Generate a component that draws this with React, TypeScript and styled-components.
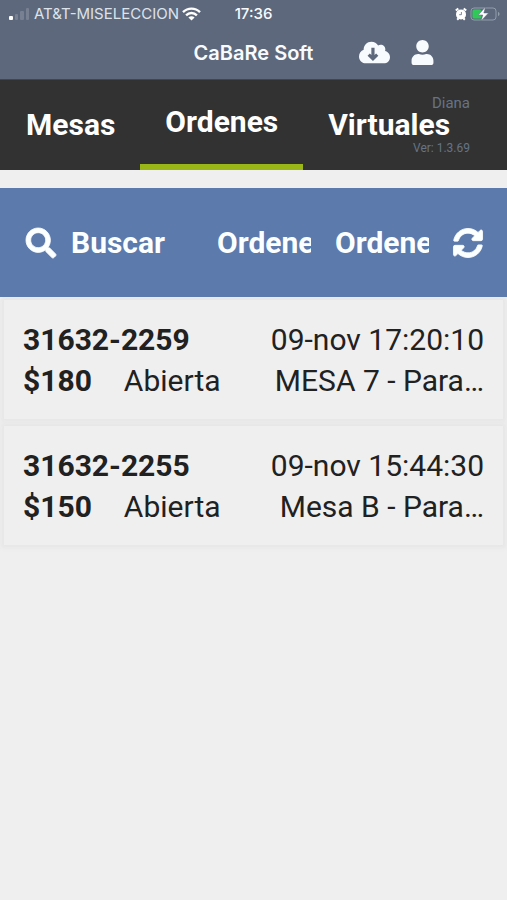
import React, { useState } from "react";
import styled, { createGlobalStyle } from "styled-components";
import { FaSearch, FaSyncAlt, FaUser } from "react-icons/fa";

const GlobalStyle = createGlobalStyle`
  * { box-sizing: border-box; }
  body {
    margin: 0;
    background: #efefef;
    color: #212121;
    font-family: Roboto, sans-serif;
  }
  button {
    margin: 0;
    padding: 0;
    border: 0;
    background: none;
    color: inherit;
    font: inherit;
    cursor: pointer;
  }
`;

const Header = styled.header`
  background: #5d687c;
  color: #f8fbfd;
  font-family: Inter, sans-serif;
  border-bottom: 1px solid #42474f;
`;

const StatusBar = styled.div`
  display: grid;
  grid-template-columns: 1fr auto 1fr;
  align-items: center;
  height: 28px;
  padding: 0 7px;
  font-size: 15px;
  line-height: 18px;
`;

const StatusGroup = styled.div<{ $end?: boolean }>`
  display: flex;
  align-items: center;
  gap: 3px;
  justify-content: ${(p) => (p.$end ? "flex-end" : "flex-start")};
  white-space: nowrap;
`;

const Carrier = styled.span`
  color: #dde3ea;
`;

const Clock = styled.time`
  font-weight: 500;
`;

const TitleBar = styled.div`
  display: grid;
  grid-template-columns: 1fr auto 1fr;
  align-items: center;
  height: 51px;
  padding-bottom: 2px;
`;

const Title = styled.h1`
  grid-column: 2;
  margin: 0;
  font-size: 20px;
  line-height: 24px;
  font-weight: 600;
`;

const TitleActions = styled.div`
  display: flex;
  align-items: center;
  gap: 20px;
  padding-left: 46px;
`;

const IconButton = styled.button`
  display: flex;
  align-items: center;
  justify-content: center;
  flex: none;
`;

const TabBar = styled.nav`
  position: relative;
  display: flex;
  height: 90px;
  background: #323232;
  color: #fff;
`;

const Tab = styled.button<{ $active: boolean }>`
  padding: 0 25px;
  font-size: 30px;
  line-height: 36px;
  font-weight: 700;
  border-bottom: ${(p) => (p.$active ? "6px solid #9ab717" : "0")};

  &:first-child {
    padding-left: 26px;
  }
`;

const SessionInfo = styled.div`
  position: absolute;
  top: 0;
  right: 37px;
  bottom: 0;
  display: flex;
  flex-direction: column;
  justify-content: space-between;
  align-items: flex-end;
  padding: 14px 0;
  color: #667485;
  pointer-events: none;
`;

const UserName = styled.span`
  font-size: 15px;
  line-height: 18px;
`;

const Version = styled.span`
  font-size: 12px;
  line-height: 16px;
`;

const Toolbar = styled.div`
  display: flex;
  align-items: center;
  height: 109px;
  margin-top: 18px;
  padding: 0 24px;
  background: #5d7aac;
  color: #fcffff;
  font-size: 30px;
  line-height: 36px;
  font-weight: 700;
`;

const SearchButton = styled.button`
  display: flex;
  align-items: center;
  gap: 15px;
  padding-left: 2px;
  margin-right: auto;
`;

const HeavySearchIcon = styled(FaSearch)`
  overflow: visible;
  stroke: currentColor;
  stroke-width: 14;
`;

const HeavySyncIcon = styled(FaSyncAlt)`
  overflow: visible;
  stroke: currentColor;
  stroke-width: 14;
`;

const SortButton = styled.button`
  width: 94px;
  margin-right: 24px;
  overflow: hidden;
  white-space: nowrap;
  text-align: left;
`;

const OrderList = styled.ul`
  margin: 0;
  padding: 3px 4px 8px;
  list-style: none;
  display: flex;
  flex-direction: column;
  gap: 7px;
`;

const OrderCard = styled.li`
  padding: 19px 19px 18px;
  background: #efefef;
  box-shadow: 0 0 4px 3px #e7e7e7;
  font-size: 30px;
  line-height: 41px;
`;

const OrderRow = styled.div`
  display: flex;
  justify-content: space-between;
  white-space: nowrap;
`;

const Status = styled.span`
  margin-left: 32px;
`;

const ListPane = styled.main`
  overflow: hidden;
`;

const SignalIcon = () => (
  <svg width="24" height="14" viewBox="0 0 24 14" aria-hidden="true">
    <rect x="2" y="9" width="4" height="4" rx="1" fill="#fff" />
    <rect x="8" y="7" width="3" height="6" rx="1" fill="#778192" />
    <rect x="13" y="4" width="4" height="9" rx="1" fill="#778192" />
    <rect x="19" y="1" width="3" height="12" rx="1" fill="#778192" />
  </svg>
);

const WifiIcon = () => (
  <svg width="19" height="14" viewBox="0 0 19 14" aria-hidden="true">
    <g fill="none" stroke="#fff" strokeWidth="2.4">
      <path d="M1 5.2C5.8.4 13.2.4 18 5.2" />
      <path d="M4.1 8.3c3.1-3 7.7-3 10.8 0" />
    </g>
    <path d="M6.4 10.5c1.8-1.6 4.4-1.6 6.2 0L9.5 13.6z" fill="#fff" />
  </svg>
);

const AlarmIcon = () => (
  <svg width="12" height="14" viewBox="0 0 12 14" aria-hidden="true">
    <path d="M.8 3.6 3.3 1.4M11.2 3.6 8.7 1.4M2.2 12.7l1.4-1.5M9.8 12.7l-1.4-1.5" stroke="#fff" strokeWidth="2" />
    <circle cx="6" cy="7.4" r="5" fill="#fff" />
    <path d="M6.4 5v2.700H4.200" fill="none" stroke="#5d687c" strokeWidth=".8" />
  </svg>
);

const BatteryIcon = () => (
  <svg width="30" height="16" viewBox="0 0 30 16" aria-hidden="true">
    <rect x="1" y="2" width="25" height="12" rx="3" fill="none" stroke="#929cab" />
    <path d="M28 6c2 .5 2 3.5 0 4z" fill="#929cab" />
    <rect x="2.5" y="3.5" width="9" height="9" rx="1.5" fill="#2fc958" />
    <path d="M15.5 1 8.2 9h4.6L11 15l7.500-8h-4.700z" fill="#fff" stroke="#5d687c" strokeWidth=".5" />
  </svg>
);

const CloudDownloadIcon = () => (
  <svg width="31" height="25" viewBox="0 0 640 512" aria-hidden="true">
    <path
      fill="currentColor"
      d="M537.6 226.6c4.1-10.7 6.4-22.4 6.4-34.6 0-53-43-96-96-96-19.7 0-38.1 6-53.3 16.2C367 64.2 315.3 32 256 32c-88.4 0-160 71.6-160 160 0 2.7.1 5.4.2 8.1C40.2 219.8 0 273.2 0 336c0 79.5 64.5 144 144 144h368c70.7 0 128-57.3 128-128 0-61.9-44-113.6-102.4-125.4z"
    />
    <path d="M288 160v226M200 298l88 88 88-88" fill="none" stroke="#5d687c" strokeWidth="66" />
  </svg>
);

const TABS = ["Mesas", "Ordenes", "Virtuales"];

const ORDERS = [
  { id: "31632-2259", date: "09-nov 17:20:10", total: "$180", status: "Abierta", place: "MESA 7 - Para…" },
  { id: "31632-2255", date: "09-nov 15:44:30", total: "$150", status: "Abierta", place: "Mesa B - Para…" },
];

export default function App() {
  const [activeTab, setActiveTab] = useState("Ordenes");

  return (
    <>
      <GlobalStyle />
      <Header>
        <StatusBar>
          <StatusGroup>
            <SignalIcon />
            <Carrier>AT&amp;T-MISELECCION</Carrier>
            <WifiIcon />
          </StatusGroup>
          <Clock>17:36</Clock>
          <StatusGroup $end>
            <AlarmIcon />
            <BatteryIcon />
          </StatusGroup>
        </StatusBar>
        <TitleBar>
          <Title>CaBaRe Soft</Title>
          <TitleActions>
            <IconButton aria-label="Descargar">
              <CloudDownloadIcon />
            </IconButton>
            <IconButton aria-label="Usuario">
              <FaUser size={25} />
            </IconButton>
          </TitleActions>
        </TitleBar>
      </Header>
      <TabBar>
        {TABS.map((tab) => (
          <Tab key={tab} $active={tab === activeTab} onClick={() => setActiveTab(tab)}>
            {tab}
          </Tab>
        ))}
        <SessionInfo>
          <UserName>Diana</UserName>
          <Version>Ver: 1.3.69</Version>
        </SessionInfo>
      </TabBar>
      <Toolbar>
        <SearchButton>
          <HeavySearchIcon size={30} aria-hidden="true" />
          Buscar
        </SearchButton>
        <SortButton>Ordenes</SortButton>
        <SortButton>Ordenes</SortButton>
        <IconButton aria-label="Actualizar">
          <HeavySyncIcon size={30} />
        </IconButton>
      </Toolbar>
      <ListPane>
        <OrderList>
          {ORDERS.map((order) => (
            <OrderCard key={order.id}>
              <OrderRow>
                <strong>{order.id}</strong>
                <time>{order.date}</time>
              </OrderRow>
              <OrderRow>
                <div>
                  <strong>{order.total}</strong>
                  <Status>{order.status}</Status>
                </div>
                <span>{order.place}</span>
              </OrderRow>
            </OrderCard>
          ))}
        </OrderList>
      </ListPane>
    </>
  );
}
